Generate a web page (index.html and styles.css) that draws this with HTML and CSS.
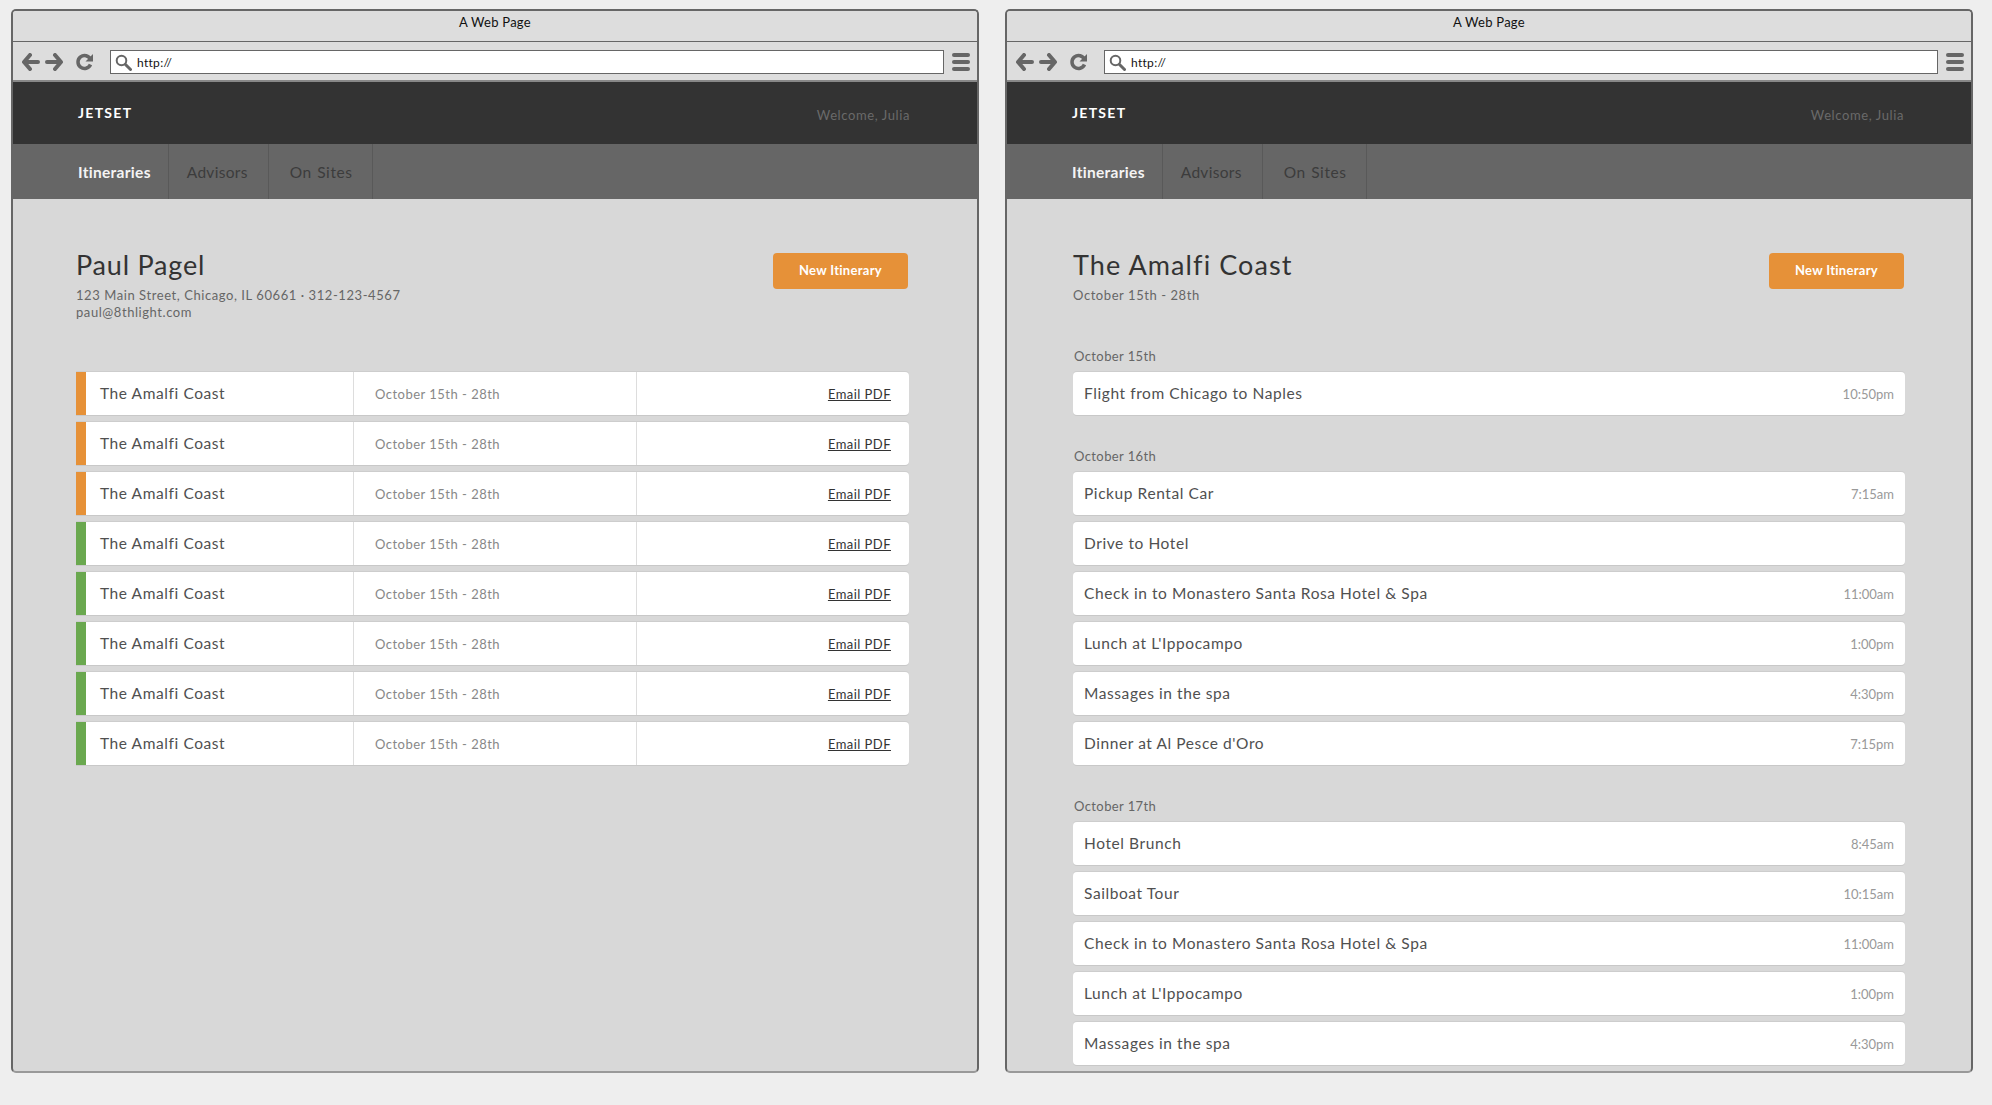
FILE: index.html
```html
<!DOCTYPE html>
<html lang="en">
<head>
<meta charset="utf-8">
<title>Jetset wireframes</title>
<link rel="stylesheet" href="styles.css">
</head>
<body>
<div class="desk">
  <section class="win">
    <div class="titlebar">A Web Page</div>
    <div class="toolbar">
      <svg class="nav-icons" width="74" height="18" viewBox="0 0 74 18"><path d="M8 2 2 9 8 16M3 9H16" class="ic"/><path d="M33 2 39 9 33 16M38 9H25" class="ic"/><path d="M68.500 6.500A6.500 6.500 0 1 0 68.500 11.500" class="ic ic-r"/><path d="M71 1v7.500H63.500z" fill="#666"/></svg>
      <div class="addr"><svg width="17" height="17" viewBox="0 0 17 17"><circle cx="6.500" cy="6.500" r="4.800" fill="none" stroke="#666" stroke-width="2"/><path d="M10.500 10.500 15.500 15.500" stroke="#666" stroke-width="3" stroke-linecap="round"/></svg><span>http://</span></div>
      <div class="burger"><i></i><i></i><i></i></div>
    </div>
    <header class="appbar"><span class="logo">JETSET</span><span class="welcome">Welcome, Julia</span></header>
    <nav class="tabs"><a class="tab tab-first on">Itineraries</a><a class="tab">Advisors</a><a class="tab tab-last">On Sites</a></nav>
    <main class="page">
      <div class="pagehead">
        <div><h1>Paul Pagel</h1><p>123 Main Street, Chicago, IL 60661 · 312-123-4567<br>paul@8thlight.com</p></div>
        <a class="btn">New Itinerary</a>
      </div>
      <ul class="rows list">
        <li class="row orange"><b>The Amalfi Coast</b><span class="date">October 15th - 28th</span><a class="pdf">Email PDF</a></li>
        <li class="row orange"><b>The Amalfi Coast</b><span class="date">October 15th - 28th</span><a class="pdf">Email PDF</a></li>
        <li class="row orange"><b>The Amalfi Coast</b><span class="date">October 15th - 28th</span><a class="pdf">Email PDF</a></li>
        <li class="row green"><b>The Amalfi Coast</b><span class="date">October 15th - 28th</span><a class="pdf">Email PDF</a></li>
        <li class="row green"><b>The Amalfi Coast</b><span class="date">October 15th - 28th</span><a class="pdf">Email PDF</a></li>
        <li class="row green"><b>The Amalfi Coast</b><span class="date">October 15th - 28th</span><a class="pdf">Email PDF</a></li>
        <li class="row green"><b>The Amalfi Coast</b><span class="date">October 15th - 28th</span><a class="pdf">Email PDF</a></li>
        <li class="row green"><b>The Amalfi Coast</b><span class="date">October 15th - 28th</span><a class="pdf">Email PDF</a></li>
      </ul>
    </main>
  </section>
  <section class="win">
    <div class="titlebar">A Web Page</div>
    <div class="toolbar">
      <svg class="nav-icons" width="74" height="18" viewBox="0 0 74 18"><path d="M8 2 2 9 8 16M3 9H16" class="ic"/><path d="M33 2 39 9 33 16M38 9H25" class="ic"/><path d="M68.500 6.500A6.500 6.500 0 1 0 68.500 11.500" class="ic ic-r"/><path d="M71 1v7.500H63.500z" fill="#666"/></svg>
      <div class="addr"><svg width="17" height="17" viewBox="0 0 17 17"><circle cx="6.500" cy="6.500" r="4.800" fill="none" stroke="#666" stroke-width="2"/><path d="M10.500 10.500 15.500 15.500" stroke="#666" stroke-width="3" stroke-linecap="round"/></svg><span>http://</span></div>
      <div class="burger"><i></i><i></i><i></i></div>
    </div>
    <header class="appbar"><span class="logo">JETSET</span><span class="welcome">Welcome, Julia</span></header>
    <nav class="tabs"><a class="tab tab-first on">Itineraries</a><a class="tab">Advisors</a><a class="tab tab-last">On Sites</a></nav>
    <main class="page page-trip">
      <div class="pagehead">
        <div><h1 class="wide">The Amalfi Coast</h1><p>October 15th - 28th</p></div>
        <a class="btn">New Itinerary</a>
      </div>
      <h2 class="day day-1">October 15th</h2>
      <ul class="rows">
        <li class="row plain"><b>Flight from Chicago to Naples</b><time>10:50pm</time></li>
      </ul>
      <h2 class="day">October 16th</h2>
      <ul class="rows">
        <li class="row plain"><b>Pickup Rental Car</b><time>7:15am</time></li>
        <li class="row plain"><b>Drive to Hotel</b></li>
        <li class="row plain"><b>Check in to Monastero Santa Rosa Hotel &amp; Spa</b><time>11:00am</time></li>
        <li class="row plain"><b>Lunch at L'Ippocampo</b><time>1:00pm</time></li>
        <li class="row plain"><b>Massages in the spa</b><time>4:30pm</time></li>
        <li class="row plain"><b>Dinner at Al Pesce d'Oro</b><time>7:15pm</time></li>
      </ul>
      <h2 class="day">October 17th</h2>
      <ul class="rows">
        <li class="row plain"><b>Hotel Brunch</b><time>8:45am</time></li>
        <li class="row plain"><b>Sailboat Tour</b><time>10:15am</time></li>
        <li class="row plain"><b>Check in to Monastero Santa Rosa Hotel &amp; Spa</b><time>11:00am</time></li>
        <li class="row plain"><b>Lunch at L'Ippocampo</b><time>1:00pm</time></li>
        <li class="row plain"><b>Massages in the spa</b><time>4:30pm</time></li>
      </ul>
    </main>
  </section>
</div>
</body>
</html>
```

FILE: styles.css
```css
* { box-sizing: border-box; }
html, body { margin: 0; height: 100%; background: #eeeeee; }
body { font-family: "Lato", "Open Sans", sans-serif; overflow: hidden; }
.desk { display: flex; gap: 26px; padding: 9px 19px 0 11px; }
.win {
  width: 968px; height: 1064px; display: flex; flex-direction: column; overflow: hidden;
  border: 2px solid #666; border-bottom-color: #999; border-radius: 5px; background: #d8d8d8;
}
.titlebar {
  height: 31px; flex: none; background: #dddddd; border-bottom: 1px solid #666;
  font-size: 13px; line-height: 22px; color: #111; text-align: center; letter-spacing: .25px;
}
.toolbar {
  height: 40px; flex: none; background: #dddddd; border-bottom: 2px solid #888;
  display: flex; align-items: center; padding: 2px 7px 0 9px;
}
.nav-icons { flex: none; margin-right: 14px; }
.ic { fill: none; stroke: #666; stroke-width: 4; stroke-linejoin: round; stroke-linecap: round; }
.ic-r { stroke-width: 3.5; stroke-linecap: butt; }
.addr {
  flex: 1; height: 24px; background: #fff; border: 1px solid #666;
  display: flex; align-items: center; gap: 5px; padding-left: 4px;
  font-size: 12px; color: #111; letter-spacing: .3px;
}
.burger { flex: none; width: 18px; margin-left: 8px; display: flex; flex-direction: column; gap: 3px; }
.burger i { display: block; height: 4px; background: #666; border-radius: 2px; }
.appbar {
  height: 62px; flex: none; background: #333; display: flex; justify-content: space-between;
  padding: 22px 67px 0 65px;
}
.logo { color: #fff; font-size: 14px; font-weight: 700; line-height: 18px; letter-spacing: 1.3px; }
.welcome { color: #6a6a6a; font-size: 13px; line-height: 18px; padding-top: 2px; letter-spacing: .6px; }
.tabs { height: 55px; flex: none; background: #666; display: flex; }
.tab {
  display: flex; align-items: center; padding: 0 20px 0 18px; border-right: 1px solid #595959;
  font-size: 15.500px; color: #3c3c3c; letter-spacing: .3px;
}
.tab-first { padding-left: 65px; padding-right: 17px; }
.tab-last { padding-left: 21px; padding-right: 20px; letter-spacing: .55px; word-spacing: 1px; }
.on { color: #f4f4f4; font-weight: 700; }
.page { flex: 1; padding: 49px 68px 0 63px; min-height: 0; }
.page-trip { padding-left: 66px; padding-right: 66px; }
.pagehead { display: flex; justify-content: space-between; align-items: flex-start; height: 108px; padding: 5px 1px 0 0; }
h1 { margin: -5px 0 0; font-size: 27px; line-height: 34px; font-weight: 400; color: #333; letter-spacing: .8px; }
h1.wide { letter-spacing: 1.1px; }
.pagehead p { margin: 5px 0 0; font-size: 13px; line-height: 17px; color: #666; letter-spacing: .57px; }
.btn {
  width: 135px; height: 36px; padding-bottom: 2px; background: #e69138; border-radius: 4px; color: #fff;
  font-size: 13px; font-weight: 700; display: flex; align-items: center; justify-content: center; letter-spacing: .3px;
}
.rows { list-style: none; margin: 0; padding: 0; display: flex; flex-direction: column; gap: 7px; }
.list { margin-top: 16px; }
.row {
  height: 43px; flex: none; background: #fff; box-shadow: 0 -1px 0 #cdcdcd, 0 1px 0 #c8c8c8;
  display: grid; align-items: stretch; border-radius: 0 4px 4px 0; font-size: 15.500px; color: #505050;
}
.row b { font-weight: 400; align-self: center; letter-spacing: .58px; padding-bottom: 2px; }
.orange, .green { grid-template-columns: 268px 283px 1fr; border-left: 10px solid; }
.orange { border-left-color: #e69138; }
.green { border-left-color: #6aa84f; }
.orange b, .green b { padding-left: 14px; border-right: 1px solid #ddd; align-self: stretch; display: flex; align-items: center; }
.date { display: flex; align-items: center; padding: 1px 0 0 21px; font-size: 13px; color: #888; letter-spacing: .48px; border-right: 1px solid #ddd; }
.pdf { align-self: center; justify-self: end; margin: 0 18px 0 0; font-size: 13px; color: #333; text-decoration: underline; letter-spacing: .45px; }
.plain { grid-template-columns: 1fr auto; border-radius: 4px; padding: 0 11px; align-items: center; }
time { font-size: 13px; color: #999; padding-top: 1px; }
.day { margin: 32px 0 7px 1px; font-size: 13px; line-height: 18px; font-weight: 400; color: #666; letter-spacing: .4px; }
.day-1 { margin-top: -9px; }
```
